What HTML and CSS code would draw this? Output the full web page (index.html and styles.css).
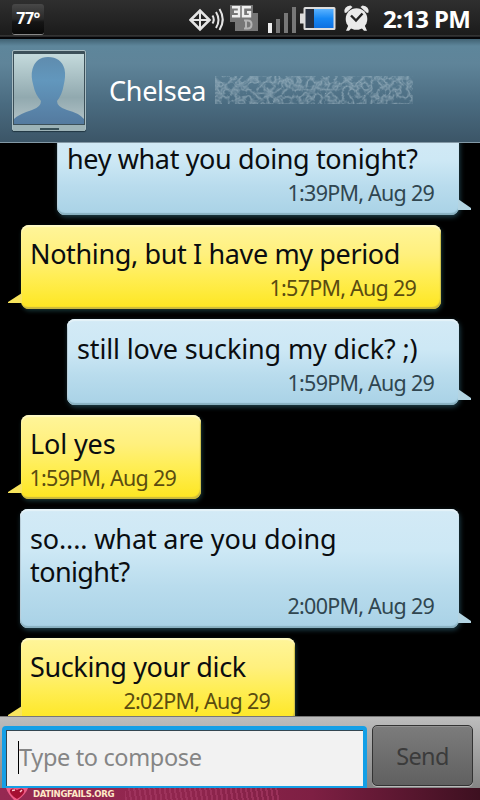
FILE: index.html
```html
<!DOCTYPE html>
<html lang="en">
<head>
<meta charset="utf-8">
<title>Messages</title>
<link rel="stylesheet" href="styles.css">
</head>
<body>
<div class="phone">
  <div class="status">
    <div class="temp"><span>77°</span></div>
    <svg class="status-icons" width="186" height="38" viewBox="0 0 186 38">
      <defs>
        <linearGradient id="bat" x1="0" y1="0" x2="0" y2="1"><stop offset="0" stop-color="#5ab2ff"/><stop offset=".5" stop-color="#1688f5"/><stop offset="1" stop-color="#0d6fe0"/></linearGradient>
      </defs>
      <g fill="none" stroke="#e4e4e4" stroke-width="2">
        <path d="M1.500 20 11 10.500 20.500 20 11 29.500Z" stroke-width="2.600"/>
        <path d="M11 10V30M1 20H21"/>
        <path d="M23.500 15.500q2.500 4 0 8M27 12q5 8 0 16M30.500 9q6.500 10.500 0 21"/>
      </g>
      <path d="M41 5h23v8h5v18H46v-9h-5Z" fill="#777"/>
      <g fill="none" stroke="#eee" stroke-width="2.400"><path d="M43 7.200h7v9h-7M45 11.700h5M62 7.200h-8v9h7v-4h-3"/></g>
      <path d="M55 20.500h3.500q4 0 4 4t-4 4H55M57 20.500v8" fill="none" stroke="#b5b5b5" stroke-width="2"/>
      <g fill="#777"><path d="M79 23h4v10h-4z" fill="#eee"/><path d="M87 19h4v14h-4zM95 13h4v20h-4zM103 7h4v26h-4z"/></g>
      <path d="M116 7h29q1.500 0 1.500 1.500V28.500q0 1.500-1.500 1.500h-29q-1.500 0-1.500-1.500v-5h-3.500v-10h3.500V8.500q0-1.500 1.500-1.500Z" fill="#ddd"/>
      <path d="M116.500 9h8.500v19h-8.500z" fill="#263040"/><path d="M125 9h19.500v19H125z" fill="url(#bat)"/>
      <g fill="#eaeaea"><circle cx="167.500" cy="19" r="10.800"/><path d="M155.500 12.500q-1-6 6-7l2 1.500-6.500 6ZM179.500 12.500q1-6-6-7l-2 1.500 6.500 6ZM159.500 25l3 3-2.500 2.800h-3ZM175.500 25l-3 3 2.500 2.800h3Z"/></g>
      <path d="m162 15.500 5 5 6.500-7" fill="none" stroke="#222" stroke-width="2.400"/>
    </svg>
    <div class="clock">2:13 PM</div>
  </div>

  <div class="header">
    <div class="avatar">
      <svg width="70" height="70" viewBox="0 0 70 70">
        <defs>
          <linearGradient id="bg" x1="0" y1="0" x2="0" y2="1"><stop offset="0" stop-color="#c4dadc"/><stop offset=".62" stop-color="#91a9af"/><stop offset="1" stop-color="#b4c4c8"/></linearGradient>
          <linearGradient id="man" x1="0" y1="0" x2="0" y2="1"><stop offset="0" stop-color="#5f8cae"/><stop offset=".35" stop-color="#6297bd"/><stop offset="1" stop-color="#547a9f"/></linearGradient>
        </defs>
        <path d="M0 0H70V70H0Z" fill="url(#bg)"/>
        <path d="M0 70V65Q5 60 18 56Q27 53 27 47Q21 40 19.500 32Q16.500 22 18.500 15Q22 3 34 3Q47 3 50.500 15Q52 22 49.500 32Q48 41 43 47Q43 53 53 56Q65 59 70 65V70Z" fill="url(#man)"/>
      </svg>
      <i class="grip"></i>
    </div>
    <div class="name">Chelsea</div>
    <svg class="smudge" width="198" height="28" viewBox="0 0 198 28">
      <filter id="noise" x="0" y="0" width="100%" height="100%">
        <feTurbulence type="turbulence" baseFrequency=".14" numOctaves="2" seed="8"/>
        <feColorMatrix values="0 0 0 0 .62  0 0 0 0 .73  0 0 0 0 .79  -1.500 0 0 0 .55"/>
        <feGaussianBlur stdDeviation=".5"/>
      </filter>
      <rect width="198" height="28" filter="url(#noise)"/>
    </svg>
  </div>

  <div class="thread">
    <div class="bubble out b1"><p class="tight">hey what you doing tonight?</p><time>1:39PM, Aug 29</time><svg class="tail" width="14" height="12"><path d="M0 0 13 9V11H0Z"/></svg></div>
    <div class="bubble in b2"><p class="tight">Nothing, but I have my period</p><time>1:57PM, Aug 29</time><svg class="tail" width="14" height="12"><path d="M14 0 0 9V10H14Z"/></svg></div>
    <div class="bubble out b3"><p>still love sucking my dick? ;)</p><time>1:59PM, Aug 29</time><svg class="tail" width="14" height="12"><path d="M0 0 13 9V11H0Z"/></svg></div>
    <div class="bubble in b4"><p>Lol yes</p><time>1:59PM, Aug 29</time><svg class="tail" width="14" height="12"><path d="M14 0 0 9V10H14Z"/></svg></div>
    <div class="bubble out b5"><p>so.... what are you doing</p><p class="tighter">tonight?</p><time>2:00PM, Aug 29</time><svg class="tail" width="14" height="12"><path d="M0 0 13 9V11H0Z"/></svg></div>
    <div class="bubble in b6"><p class="tight">Sucking your dick</p><time>2:02PM, Aug 29</time><svg class="tail" width="14" height="12"><path d="M14 0 0 9V10H14Z"/></svg></div>
  </div>

  <div class="compose">
    <div class="field"><i class="caret"></i><span>Type to compose</span></div>
    <div class="send">Send</div>
  </div>

  <div class="footer">
    <svg width="22" height="12" viewBox="0 0 22 12"><path d="M0 0H22Q20 6 12 12H8Q2 6 0 0Z" fill="#ee5b86"/><path d="M11 11Q3 6 4 2Q6-1 11 2Q16-1 18 2Q19 6 11 11Z" fill="#a50f31"/><path d="M6 2.500 9 2M14 4l2-2" stroke="#ffc4cf" stroke-width="1.500"/></svg>
    <span>DATINGFAILS.ORG</span>
    <i class="waves"></i>
  </div>
</div>
</body>
</html>
```
FILE: styles.css
```css
* { box-sizing: border-box; }
body { margin: 0; background: #000; font-family: "Noto Sans", sans-serif; }
p { margin: 0; }
.phone { width: 480px; height: 800px; display: flex; flex-direction: column; overflow: hidden; background: #000; }

.status { flex: none; height: 39px; display: flex; align-items: flex-start; padding-left: 12px; background: linear-gradient(#2f2f2f, #1b1b1b 35px, #4a4a4a 36px, #050508 37px); }
.temp { width: 32px; height: 31px; margin-top: 4px; border-radius: 3px; border-bottom: 1px solid #888; background: linear-gradient(#484848, #292929 50%, #151515 60%, #090909); color: #fff; font-size: 16px; font-weight: 700; line-height: 28px; text-align: center; letter-spacing: -.6px; }
.status-icons { margin-left: 145px; }
.clock { margin-left: 8px; color: #fff; font-size: 24px; font-weight: 700; line-height: 38px; white-space: nowrap; letter-spacing: -.65px; }

.header { flex: none; height: 104px; display: flex; align-items: flex-start; padding-left: 12px; background: linear-gradient(#416273, #5e869b 7px, #5f8499 25px, #4a6b80 65px, #3c5668 102px); border-bottom: 1px solid #8399a6; }
.avatar { width: 74px; height: 81px; margin-top: 11px; padding: 3px 1px 0; border: 1px solid #a9bdc3; border-radius: 2px; background: #3c5059; box-shadow: 0 1px 1px #213642; }
.avatar svg { display: block; }
.grip { display: block; height: 6px; margin: 1px -1px 0; background: linear-gradient(90deg, transparent 27px, #385058 27px 46px, transparent 46px) 0 3px / 100% 2px no-repeat, #9db3b7; }
.name { width: 97px; margin: 34px 0 0 23px; color: #fff; font-size: 27px; line-height: 36px; white-space: nowrap; letter-spacing: -.3px; }
.smudge { margin: 37px 0 0 9px; opacity: .75; }

.thread { flex: 1; min-height: 0; display: flex; flex-direction: column; gap: 10px; padding: 0 21px; overflow: hidden; }
.bubble { position: relative; flex: none; height: 84px; padding: 12px 25px 0 9px; border-radius: 8px; display: flex; flex-direction: column; }
.bubble p { font-size: 27px; line-height: 33px; white-space: nowrap; color: #0a0d10; letter-spacing: -.14px; }
.bubble p.tight { letter-spacing: -.37px; }
.bubble p.tighter { letter-spacing: -.6px; }
.bubble time { align-self: flex-end; margin-top: 4px; font-size: 21.5px; line-height: 28px; white-space: nowrap; letter-spacing: -.75px; }
.out { align-self: flex-end; padding-left: 10px; background: linear-gradient(#d3eaf6, #cde8f5 35%, #b9dced 65%, #a9d2e6); box-shadow: inset 0 2px 1px #e6f3f9, inset 0 -2px 1px #88b0c0, inset 1px 0 #b8cbd5, 1px 2px 5px #1f404c; }
.out time { color: #304650; }
.in { align-self: flex-start; background: linear-gradient(#fff59a, #fff07d 35%, #ffee57 60%, #fde620); box-shadow: inset 0 2px 1px #fff9c4, inset -1px -2px 1px #c9b83e, 1px 2px 4px #173536; }
.in time { color: #5a4c10; }
.tail { position: absolute; bottom: 4px; }
.out .tail { left: calc(100% - 1px); bottom: 4px; fill: #b3d4e2; }
.in .tail { right: calc(100% - 1px); fill: #f8e45c; }
.b1 { width: 402px; margin-top: -12px; padding-top: 11px; }
.b2 { width: 420px; }
.b3 { width: 392px; height: 86px; padding-top: 13px; }
.b4 { width: 180px; }
.b5 { width: 439px; height: 119px; padding-top: 13px; }
.b6 { width: 274px; }

.compose { flex: none; height: 72px; display: flex; align-items: flex-start; padding: 10px 7px 0 2px; gap: 5px; background: linear-gradient(#bdbdbd, #858585); border-top: 1px solid #777; }
.field { width: 365px; height: 62px; display: flex; align-items: center; padding: 0 0 2px 11px; margin-top: -1px; border: 4px solid #149fe6; border-bottom-width: 2px; border-radius: 4px 4px 0 0; background: #f2f2f2; box-shadow: inset 1px 1px #344651; color: #858585; font-size: 23.5px; letter-spacing: -.35px; white-space: nowrap; }
.caret { width: 1px; height: 33px; background: #000; margin: 0 0 0 1px; }
.send { width: 101px; height: 61px; margin-top: -2px; border: 1px solid #333; border-radius: 5px; background: linear-gradient(#7c7c7c, #606060); box-shadow: inset 0 1px #929292, 0 1px #bbb; color: #3b3b3b; font-size: 23.5px; letter-spacing: -.6px; line-height: 61px; text-align: center; }

.footer { flex: none; height: 12px; display: flex; align-items: center; gap: 5px; padding-left: 6px; background: linear-gradient(90deg, #962952, #8f254d 40%, #7e1f43 65%, #3d1020); overflow: hidden; }
.footer span { width: 87px; color: #ffe9c8; font: 700 9.5px/12px "DejaVu Sans Condensed", "DejaVu Sans", sans-serif; font-stretch: condensed; letter-spacing: -.35px; white-space: nowrap; }
.waves { width: 155px; height: 12px; background: repeating-linear-gradient(80deg, #a43862 0 2px, transparent 2px 5px); opacity: .7; }
```
